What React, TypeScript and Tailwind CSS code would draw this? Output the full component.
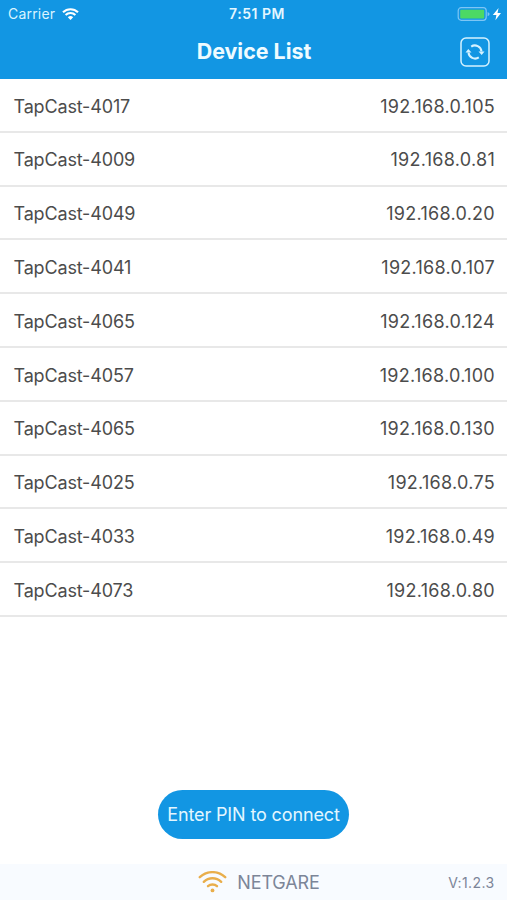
interface Device {
    name: string
    ip: string
}

const devices: Device[] = [
    { name: "TapCast-4017", ip: "192.168.0.105" },
    { name: "TapCast-4009", ip: "192.168.0.81" },
    { name: "TapCast-4049", ip: "192.168.0.20" },
    { name: "TapCast-4041", ip: "192.168.0.107" },
    { name: "TapCast-4065", ip: "192.168.0.124" },
    { name: "TapCast-4057", ip: "192.168.0.100" },
    { name: "TapCast-4065", ip: "192.168.0.130" },
    { name: "TapCast-4025", ip: "192.168.0.75" },
    { name: "TapCast-4033", ip: "192.168.0.49" },
    { name: "TapCast-4073", ip: "192.168.0.80" },
]

function StatusBar() {
    return (
        <div className="grid h-[27px] grid-cols-3 items-center pl-2 pr-1 text-[14px] leading-none">
            <div className="flex items-center gap-[7px]">
                <span className="tracking-[0.2px] text-[#d9f4ff]">Carrier</span>
                <svg className="h-3 w-[17px]" viewBox="0 0 17 12" fill="none" stroke="white" strokeWidth="2.1">
                    <path d="M1 4.3a10.7 10.7 0 0 1 15 0" />
                    <path d="M3.6 7a7 7 0 0 1 9.8 0" />
                    <path d="M8.5 12 5.8 9.2a3.9 3.9 0 0 1 5.4 0z" fill="white" stroke="none" />
                </svg>
            </div>
            <span className="pl-[3px] text-center font-semibold tracking-[0.5px] text-[#e3f7ff]">7:51 PM</span>
            <div className="flex items-center justify-end">
                <svg className="h-4 w-[46px]" viewBox="0 0 46 16">
                    <rect x="1.2" y="1.7" width="28" height="12.6" rx="3" fill="none" stroke="#7dc6f5" strokeWidth="1.2" />
                    <rect x="3.2" y="3.7" width="24" height="8.8" rx="1" fill="#4cd964" />
                    <path d="M30.6 5.9q2 1 2 2.2t-2 2.2z" fill="#7dc6f5" />
                    <path d="M41.6 2.1 35.8 8.9h3.6L38.4 14.3l5.6-7.2h-3.5z" fill="white" />
                </svg>
            </div>
        </div>
    )
}

function RefreshIcon() {
    return (
        <svg className="h-[30px] w-[30px]" viewBox="0 0 30 30" fill="none" stroke="#d5f2ff">
            <rect x="1" y="1" width="28" height="28" rx="5" strokeWidth="1.5" />
            <path d="M11.2 9.6a6.6 6.6 0 0 1 10.3 4.9M18.8 20.4a6.6 6.6 0 0 1-10.3-4.9" strokeWidth="2.1" />
            <path d="M18.5 14.4h6L21.7 18zM11.5 15.6h-6L8.3 12z" fill="#d5f2ff" stroke="none" />
        </svg>
    )
}

export default function App() {
    return (
        <div className="flex h-[900px] w-full flex-col bg-white font-['Inter',sans-serif]">
            <header className="h-[79px] shrink-0 bg-[#1296e3]">
                <StatusBar />
                <div className="grid h-[49px] grid-cols-[1fr_auto_1fr] items-center pr-[17px]">
                    <h1 className="col-start-2 pl-[18px] text-[21.4px] font-bold leading-none text-[#eefbff]">Device List</h1>
                    <button className="justify-self-end" aria-label="Refresh">
                        <RefreshIcon />
                    </button>
                </div>
            </header>

            <ul className="shrink-0">
                {devices.map((device, i) => (
                    <li
                        key={i}
                        className="flex h-[53.8px] items-center justify-between border-b-2 border-[#e8e8e8] pt-[2.5px] pl-[13.5px] pr-3 text-[18px] text-[#4c4c4c]"
                    >
                        <span className="tracking-[-0.16px]">{device.name}</span>
                        <span className="tracking-[0.28px]">{device.ip}</span>
                    </li>
                ))}
            </ul>

            <div className="flex flex-1 items-end justify-center pb-[25px]">
                <button className="h-[49px] w-[191px] rounded-full bg-[#1296e3] text-[18px] tracking-[-0.13px] whitespace-nowrap text-[#e3f6ff]">
                    Enter PIN to connect
                </button>
            </div>

            <footer className="grid h-9 shrink-0 grid-cols-[1fr_auto_1fr] items-center bg-[#f8fbff] text-[#7c8598]">
                <div className="col-start-2 flex items-center gap-[10px] pl-[11px]">
                    <svg className="h-[22px] w-[29px]" viewBox="0 0 29 22" fill="none" stroke="#e9ae4b" strokeWidth="2.4" strokeLinecap="round">
                        <path d="M1.8 6.2a18.5 18.5 0 0 1 25.4 0" />
                        <path d="M5.8 10.8a12.6 12.6 0 0 1 17.4 0" />
                        <path d="M10 15.2a6.6 6.6 0 0 1 9 0" />
                        <circle cx="14.5" cy="19.4" r="1.9" fill="#e9ae4b" stroke="none" />
                    </svg>
                    <span className="text-[18px] tracking-[-0.15px]">NETGARE</span>
                </div>
                <span className="justify-self-end pr-[12.5px] text-[14px] tracking-[0.4px]">V:1.2.3</span>
            </footer>
        </div>
    )
}
